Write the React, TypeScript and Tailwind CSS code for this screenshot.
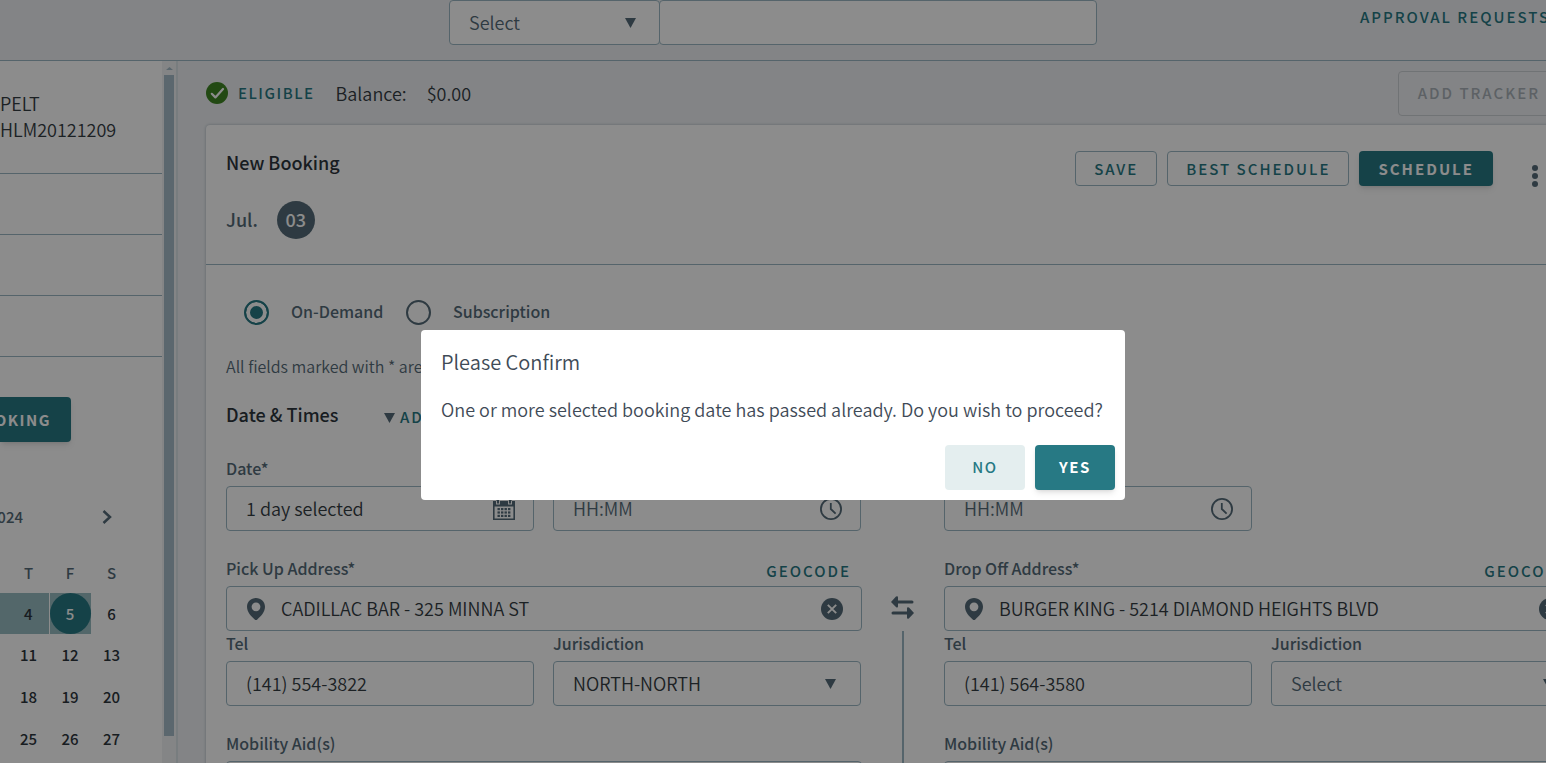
import React, { useId, useState } from 'react';

const CaretDown = ({ className = '' }: { className?: string }) => (
  <svg
    viewBox="0 0 11 10"
    className={`w-[11px] h-[10px] shrink-0 fill-[#556b78] ${className}`}
  >
    <path d="M0 0H11L5.5 10Z" />
  </svg>
);

const ClockIcon = () => (
  <svg viewBox="0 0 22 22" className="size-[22px] shrink-0" fill="none" stroke="#556b78">
    <circle cx="11" cy="11" r="10.1" strokeWidth="1.8" />
    <path d="M10.8 5V11L15.6 15.6" strokeWidth="1.8" />
  </svg>
);

const CalendarIcon = () => (
  <svg viewBox="0 0 22 24" className="w-[22px] h-6 shrink-0">
    <path
      fill="#556b78"
      fillRule="evenodd"
      d="M0 4H3V0H6V4H16V0H19V4H22V23H0ZM1.6 9.5V21.4H20.4V9.5Z"
    />
    <path fill="#fff" d="M3 3.5h1v3h2v-3h1v4H3zM15 3.5h1v3h2v-3h1v4h-4z" />
    <g fill="#556b78">
      {[11, 14.4, 17.8].map((y) =>
        [4.5, 8, 11.5, 15].map((x) => (
          <rect key={`${x}-${y}`} x={x} y={y} width="2.4" height="2.2" />
        ))
      )}
    </g>
  </svg>
);

const PinIcon = () => (
  <svg viewBox="0 0 18 22" className="ml-px w-[18px] h-[22px] shrink-0">
    <path
      fill="#556b78"
      fillRule="evenodd"
      d="M9 0C4 0 0 3.9 0 8.8C0 14.6 4.6 18.6 7.7 21.5Q9 22.5 10.3 21.5C13.4 18.6 18 14.6 18 8.8C18 3.9 14 0 9 0ZM9 4.4A4.4 4.4 0 1 1 9 13.2A4.4 4.4 0 1 1 9 4.4Z"
    />
  </svg>
);

const ClearIcon = () => (
  <svg viewBox="0 0 22 22" className="size-[22px] shrink-0">
    <circle cx="11" cy="11" r="11" fill="#556b78" />
    <path d="M6.8 6.8L15.2 15.2M15.2 6.8L6.8 15.2" stroke="#fff" strokeWidth="1.9" />
  </svg>
);

const SwapIcon = () => (
  <svg viewBox="0 0 23 23" className="mr-[2px] size-[23px]" fill="#556b78">
    <path d="M0 6L5 .6Q7 -.4 7 1.6V4.5H21Q22.5 4.5 22.5 6T21 7.5H7V10.2Q7 12 5.2 11.2Z" />
    <path d="M23 17L18 11.6Q16 10.6 16 12.6V15.5H2Q.5 15.5 .5 17T2 18.5H16V21.4Q16 23.2 17.8 22.4Z" />
  </svg>
);

const CheckIcon = () => (
  <svg viewBox="0 0 22 22" className="size-[22px] shrink-0">
    <circle cx="11" cy="11" r="11" fill="#3f8624" />
    <path
      d="M5.8 11.8L9.4 15.4L17 7"
      fill="none"
      stroke="#fff"
      strokeWidth="2.2"
      strokeLinecap="round"
      strokeLinejoin="round"
    />
  </svg>
);

const fieldBox =
  'flex h-[45px] w-full items-center rounded border border-[#9bb7c4] bg-white';
const labelText = 'block h-6 mb-[6px] text-[16px] leading-6 font-medium text-[#556b78]';
const action = 'text-[15px] font-medium tracking-[2px] text-[#277984]';

interface TextFieldProps {
  label: string;
  value?: string;
  placeholder?: string;
  before?: React.ReactNode;
  after?: React.ReactNode;
  link?: string;
}

const TextField = ({ label, value, placeholder, before, after, link }: TextFieldProps) => {
  const id = useId();
  return (
    <div className="min-w-0">
      <div className="flex justify-between">
        <label htmlFor={id} className={labelText}>
          {label}
        </label>
        {link && (
          <a href="#geocode" className={`${action} pt-1 pr-[11px] leading-[22px]`}>
            {link}
          </a>
        )}
      </div>
      <div className={`${fieldBox} pl-[19px] pr-[18px] gap-4`}>
        {before}
        <input
          id={id}
          defaultValue={value}
          placeholder={placeholder}
          className="min-w-0 grow bg-transparent text-[18px] font-[350] text-[#343c43] outline-none placeholder:text-[#556b78]"
        />
        {after}
      </div>
    </div>
  );
};

const SelectField = ({ label, value }: { label: string; value: string }) => {
  const id = useId();
  return (
    <div className="min-w-0">
      <label htmlFor={id} className={labelText}>
        {label}
      </label>
      <div className={`${fieldBox} relative`}>
        <select
          id={id}
          className={`h-full w-full appearance-none bg-transparent px-[19px] text-[18px] font-[350] outline-none ${
            value === 'Select' ? 'text-[#556b78]' : 'text-[#343c43]'
          }`}
        >
          <option>{value}</option>
        </select>
        <CaretDown className="pointer-events-none absolute right-6" />
      </div>
    </div>
  );
};

interface AddressProps {
  title: string;
  address: string;
  tel: string;
  jurisdiction: string;
}

const AddressColumn = ({ title, address, tel, jurisdiction }: AddressProps) => (
  <div className="flex min-w-0 flex-col">
    <TextField
      label={title}
      value={address}
      link="GEOCODE"
      before={<PinIcon />}
      after={
        <button type="button" aria-label="Clear address">
          <ClearIcon />
        </button>
      }
    />
    <div className="grid grid-cols-2 gap-[19px] pr-px">
      <TextField label="Tel" value={tel} />
      <SelectField label="Jurisdiction" value={jurisdiction} />
    </div>
    <div className="mt-[25px]">
      <TextField label="Mobility Aid(s)" />
    </div>
  </div>
);

const weeks = [
  ['11', '12', '13'],
  ['18', '19', '20'],
  ['25', '26', '27'],
];

const Sidebar = () => (
  <aside className="flex w-[178px] shrink-0 border-r-2 border-[#dbe4e8] bg-white">
    <div className="w-[162px] overflow-hidden text-[#2d353c]">
      <div className="h-[113px] border-b border-[#9bb7c4] pt-[29px] text-[18px] leading-[26px] font-[350] text-[#343c43]">
        <p>PELT</p>
        <p>HLM20121209</p>
      </div>
      <div className="h-[61px] border-b border-[#9bb7c4]" />
      <div className="h-[61px] border-b border-[#9bb7c4]" />
      <div className="h-[61px] border-b border-[#9bb7c4]" />
      <button className="mt-10 flex h-[45px] w-[71px] justify-end rounded-r bg-[#277984] pr-5 text-[15px] leading-[45px] font-bold tracking-widest text-white shadow-md">
        OKING
      </button>
      <div className="mt-[60px] flex h-[30px] items-center text-[15px] font-medium text-[#556b78]">
        <span className="flex w-[23px] justify-end">024</span>
        <button aria-label="Next month" className="ml-[79px]">
          <svg viewBox="0 0 10 14" className="w-[10px] h-[14px]" fill="none">
            <path d="M1.5 1L8 7L1.5 13" stroke="#556b78" strokeWidth="2.5" />
          </svg>
        </button>
      </div>
      <table className="mt-[21px] w-[132px] table-fixed text-center text-[15px] leading-6 font-medium">
        <thead className="text-[#556b78]">
          <tr className="h-10">
            <th className="w-[49px] p-0 pl-2 font-medium">T</th>
            <th className="w-[42px] p-0 font-medium">F</th>
            <th className="p-0 font-medium">S</th>
          </tr>
        </thead>
        <tbody>
          <tr className="h-[41px]">
            <td className="bg-[#98bcc1] p-0 pl-2">4</td>
            <td className="border-l border-white bg-[#98bcc1] p-0 text-white">
              <span className="flex size-[41px] items-center justify-center rounded-full bg-[#277984]">
                5
              </span>
            </td>
            <td className="p-0">6</td>
          </tr>
          {weeks.map(([thu, fri, sat]) => (
            <tr key={thu} className="h-[42px]">
              <td className="p-0 pl-2">{thu}</td>
              <td className="p-0">{fri}</td>
              <td className="p-0">{sat}</td>
            </tr>
          ))}
        </tbody>
      </table>
    </div>
    <div className="flex w-[14px] flex-col items-center bg-[#f0f3f5]">
      <svg viewBox="0 0 7 3" className="mt-[6px] w-[7px] h-[3px] fill-[#a7bcc8]">
        <path d="M0 3L3.5 0L7 3Z" />
      </svg>
      <div className="mt-[5px] mb-[27px] w-[10px] grow bg-[#a7bcc8]" />
    </div>
  </aside>
);

const Header = () => (
  <header className="grid h-[61px] shrink-0 grid-cols-[1fr_648px_1fr] border-b border-[#9bb7c4]">
    <div />
    <div className="flex">
      <div className={`${fieldBox} relative max-w-[211px]`}>
        <select
          aria-label="Search type"
          className="h-full w-full appearance-none px-[19px] text-[18px] font-[350] text-[#556b78] outline-none"
        >
          <option>Select</option>
        </select>
        <CaretDown className="pointer-events-none absolute right-[23px]" />
      </div>
      <input
        aria-label="Search"
        className="-ml-px h-[45px] min-w-0 grow rounded border border-[#9bb7c4] bg-white px-5 text-[18px] outline-none"
      />
    </div>
    <div className="-mr-1 flex justify-end">
      <a href="#approvals" className={`${action} h-8 pt-[2px] leading-[30px] whitespace-nowrap`}>
        APPROVAL REQUESTS
      </a>
    </div>
  </header>
);

const radioStyle =
  'size-[25px] appearance-none rounded-full border-2 border-[#556b78] bg-white checked:border-[#277984] checked:bg-[#277984] checked:shadow-[inset_0_0_0_4px_white]';
const cardButton = 'h-[35px] rounded border border-[#9bb7c4] px-[18px] pt-px';

const BookingCard = () => {
  const [kind, setKind] = useState('demand');

  return (
    <section className="-mr-[54px] grow rounded-t bg-white shadow-[0_0_3px_rgba(60,90,110,0.4)]">
      <div className="h-[140px] border-b border-[#9bb7c4] px-5 pt-[26px]">
        <div className="flex items-start gap-[10px] pr-[42px]">
          <h2 className="grow text-[18px] leading-[22px] font-medium text-[#2d353c]">
            New Booking
          </h2>
          <button className={`${action} ${cardButton}`}>SAVE</button>
          <button className={`${action} ${cardButton}`}>BEST SCHEDULE</button>
          <button className="h-[35px] rounded bg-[#277984] px-[19px] pt-px text-[15px] font-bold tracking-[2px] text-white shadow-md">
            SCHEDULE
          </button>
          <button aria-label="More actions" className="mt-[14px] ml-[29px]">
            <svg viewBox="0 0 6 22" className="w-[6px] h-[22px] fill-[#556b78]">
              <circle cx="3" cy="3" r="3" />
              <circle cx="3" cy="11" r="3" />
              <circle cx="3" cy="19" r="3" />
            </svg>
          </button>
        </div>
        <div className="mt-[14px] flex items-start gap-[19px] text-[18px] leading-9 font-medium text-[#556b78]">
          <span>Jul.</span>
          <span className="size-[38px] rounded-full bg-[#556b78] text-center text-white">03</span>
        </div>
      </div>

      <form className="px-5 pt-[35px]" onSubmit={(e) => e.preventDefault()}>
        <div className="flex h-[25px] items-center pl-[18px] text-[16px] leading-6 font-medium text-[#556b78]">
          <input
            id="demand"
            type="radio"
            name="kind"
            checked={kind === 'demand'}
            onChange={() => setKind('demand')}
            className={radioStyle}
          />
          <label htmlFor="demand" className="w-[137px] pb-[3px] pl-[22px]">
            On-Demand
          </label>
          <input
            id="subscription"
            type="radio"
            name="kind"
            checked={kind === 'subscription'}
            onChange={() => setKind('subscription')}
            className={radioStyle}
          />
          <label htmlFor="subscription" className="pb-[3px] pl-[22px]">
            Subscription
          </label>
        </div>
        <p className="mt-[29px] text-[16px] leading-6 font-[350] text-[#556b78]">
          All fields marked with * are
        </p>
        <div className="mt-6 flex h-6 items-center">
          <h3 className="w-[158px] text-[18px] font-medium text-[#2d353c]">Date &amp; Times</h3>
          <button type="button" className={`${action} flex items-center gap-[5px] pt-[7px]`}>
            <CaretDown />
            ADD
          </button>
        </div>

        <div className="mt-[30px] grid grid-cols-[1fr_82px_1fr]">
          <div className="grid grid-cols-2 gap-[19px] pr-px">
            <TextField label="Date*" value="1 day selected" after={<CalendarIcon />} />
            <TextField label="Pick Up" placeholder="HH:MM" after={<ClockIcon />} />
          </div>
          <div />
          <div className="grid grid-cols-2 gap-[19px] pr-px">
            <TextField label="Drop" placeholder="HH:MM" after={<ClockIcon />} />
          </div>
        </div>

        <div className="mt-[25px] grid grid-cols-[1fr_82px_1fr]">
          <AddressColumn
            title="Pick Up Address*"
            address="CADILLAC BAR - 325 MINNA ST"
            tel="(141) 554-3822"
            jurisdiction="NORTH-NORTH"
          />
          <div className="flex flex-col items-center pt-10">
            <button type="button" aria-label="Swap addresses">
              <SwapIcon />
            </button>
            <div className="mt-3 w-[2px] grow bg-[#9bb7c4]" />
          </div>
          <AddressColumn
            title="Drop Off Address*"
            address="BURGER KING - 5214 DIAMOND HEIGHTS BLVD"
            tel="(141) 564-3580"
            jurisdiction="Select"
          />
        </div>
      </form>
    </section>
  );
};

const ConfirmDialog = () => (
  <div className="fixed inset-0 flex items-center justify-center bg-black/45 pt-[67px]">
    <div
      role="dialog"
      aria-labelledby="confirm-title"
      className="w-[704px] rounded bg-white text-[#3f4b57]"
    >
      <h2 id="confirm-title" className="px-5 pt-4 text-[20px] leading-8 font-[350]">
        Please Confirm
      </h2>
      <p className="px-5 pt-[17px] text-[18px] leading-7 font-[350] whitespace-nowrap">
        One or more selected booking date has passed already. Do you wish to proceed?
      </p>
      <div className="flex justify-end gap-[10px] px-[10px] pt-[22px] pb-[10px]">
        <button className="h-[45px] w-20 rounded bg-[#e4eeef] text-[15px] font-medium tracking-widest text-[#277984]">
          NO
        </button>
        <button className="h-[45px] w-20 rounded bg-[#277984] text-[15px] font-bold tracking-widest text-white shadow-md">
          YES
        </button>
      </div>
    </div>
  </div>
);

export default function App() {
  return (
    <div className="flex h-screen flex-col overflow-hidden bg-[#eff1f4] font-['Source_Sans_Pro','Noto_Sans_CJK_SC',sans-serif]">
      <Header />
      <div className="flex min-h-0 grow">
        <Sidebar />
        <main className="flex min-w-0 grow flex-col pl-7">
          <div className="-mr-[14px] flex h-16 shrink-0 items-center">
            <CheckIcon />
            <span className="ml-[10px] text-[15px] font-medium tracking-widest text-[#277984]">
              ELIGIBLE
            </span>
            <span className="ml-[21px] text-[18px] font-[350] text-[#343c43]">Balance:</span>
            <span className="ml-5 text-[18px] font-[350] text-[#343c43]">$0.00</span>
            <button
              disabled
              className="ml-auto h-[45px] rounded border border-[#cdd1d5] px-[19px] text-[15px] font-medium tracking-[2px] text-[#a9b1b8]"
            >
              ADD TRACKER
            </button>
          </div>
          <BookingCard />
        </main>
      </div>
      <ConfirmDialog />
    </div>
  );
}
